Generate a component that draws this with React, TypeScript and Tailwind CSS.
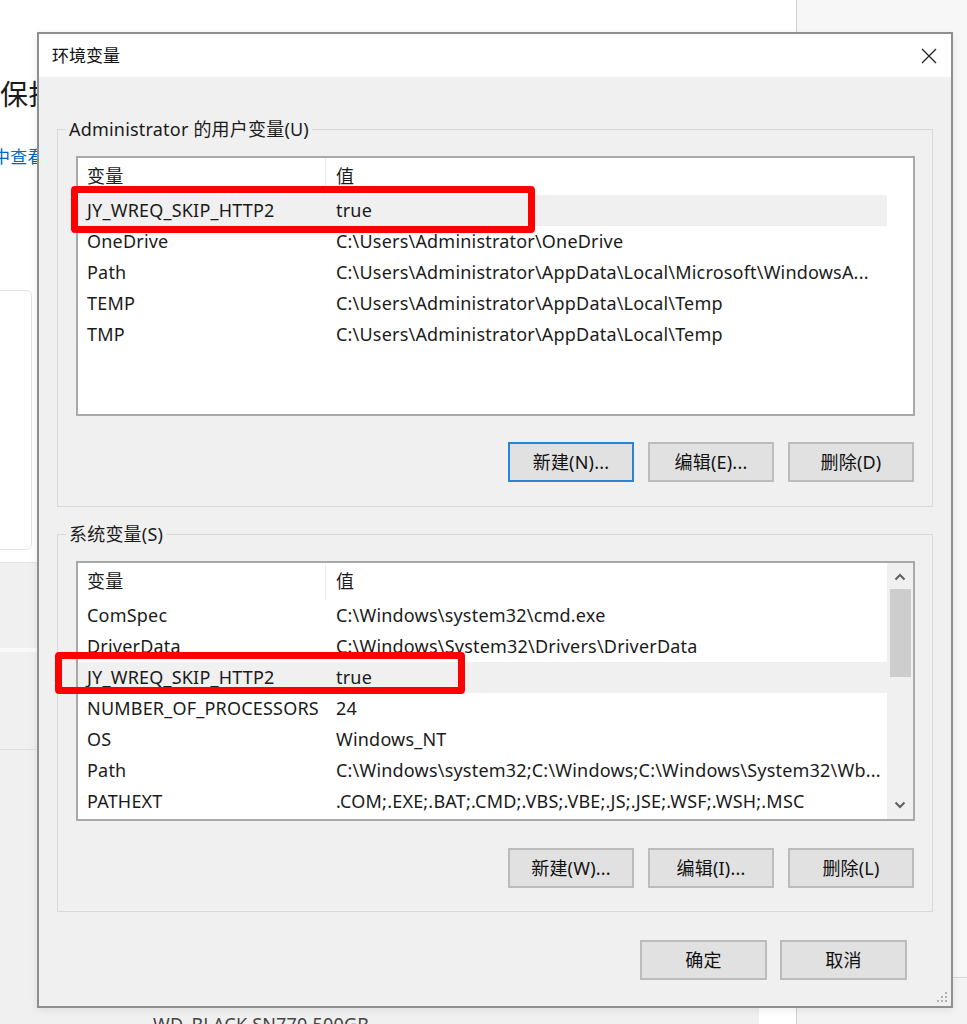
import React from 'react';

// environment variables dialog over a partially visible settings page

type Row = { name: string; value: string; selected?: boolean };

const userVars: Row[] = [
	{ name: 'JY_WREQ_SKIP_HTTP2', value: 'true', selected: true },
	{ name: 'OneDrive', value: 'C:\\Users\\Administrator\\OneDrive' },
	{ name: 'Path', value: 'C:\\Users\\Administrator\\AppData\\Local\\Microsoft\\WindowsA...' },
	{ name: 'TEMP', value: 'C:\\Users\\Administrator\\AppData\\Local\\Temp' },
	{ name: 'TMP', value: 'C:\\Users\\Administrator\\AppData\\Local\\Temp' },
];

const systemVars: Row[] = [
	{ name: 'ComSpec', value: 'C:\\Windows\\system32\\cmd.exe' },
	{ name: 'DriverData', value: 'C:\\Windows\\System32\\Drivers\\DriverData' },
	{ name: 'JY_WREQ_SKIP_HTTP2', value: 'true', selected: true },
	{ name: 'NUMBER_OF_PROCESSORS', value: '24' },
	{ name: 'OS', value: 'Windows_NT' },
	{ name: 'Path', value: 'C:\\Windows\\system32;C:\\Windows;C:\\Windows\\System32\\Wb...' },
	{ name: 'PATHEXT', value: '.COM;.EXE;.BAT;.CMD;.VBS;.VBE;.JS;.JSE;.WSF;.WSH;.MSC' },
];

const WinButton = ({ label, focused = false, wide = false }: { label: string; focused?: boolean; wide?: boolean }) => (
	<button
		type="button"
		className={`flex h-[40px] items-center justify-center border-2 bg-[#e1e1e1] text-[18px] tracking-[0.2px] text-[#111] ${wide ? 'w-[127px]' : 'w-[126px]'} ${focused ? 'border-[#2a84d2]' : 'border-[#bcbcbc]'}`}
	>
		{label}
	</button>
);

const Chevron = ({ up }: { up?: boolean }) => (
	<svg width="12" height="8" viewBox="0 0 12 8" className="text-[#606060]">
		<path d={up ? 'M1.5 6.5 L6 2 L10.5 6.5' : 'M1.5 1.5 L6 6 L10.5 1.5'} fill="none" stroke="currentColor" strokeWidth="2" />
	</svg>
);

const VarList = ({ rows, scroll = false }: { rows: Row[]; scroll?: boolean }) => (
	<div className="ml-[18px] flex h-[260px] w-[839px] border-2 border-[#a9a9a9] bg-white">
		<div className="w-[809px] overflow-hidden">
			<div className="flex h-[37px] items-center">
				<div className="flex h-full w-[248px] items-center border-r border-[#ececec] pl-[9px]">变量</div>
				<div className="pl-[10px]">值</div>
			</div>
			{rows.map((r) => (
				<div key={r.name + r.value} className={`flex h-[31px] items-center whitespace-nowrap ${r.selected ? 'bg-[#f0f0f0]' : ''}`}>
					<div className="w-[248px] overflow-hidden pl-[9px]">{r.name}</div>
					<div className="overflow-hidden pl-[10px]">{r.value}</div>
				</div>
			))}
		</div>
		{scroll && (
			<div className="flex w-[26px] flex-col items-center bg-[#f0f0f0]">
				<div className="flex h-[26px] items-center justify-center pt-[1px]">
					<Chevron up />
				</div>
				<div className="h-[88px] w-[21px] bg-[#cdcdcd]" />
				<div className="flex-1" />
				<div className="flex h-[28px] items-center justify-center">
					<Chevron />
				</div>
			</div>
		)}
	</div>
);

const GroupBox = ({ label, className, children }: { label: string; className: string; children: React.ReactNode }) => (
	<div className={`ml-[18px] w-[876px] border border-[#d9d9d9] ${className}`}>
		<div className="-mt-[13px] ml-[8px] w-fit bg-[#f0f0f0] px-[3px] leading-[24px]">{label}</div>
		{children}
	</div>
);

export default function App() {
	return (
		<div className="relative h-[1024px] w-[967px] overflow-hidden font-['Noto_Sans','Noto_Sans_CJK_SC',sans-serif] text-[18px] tracking-[0.2px] text-[#1b1b1b]">
			{/* page behind the dialog */}
			<div className="flex h-full">
				<div className="flex w-[797px] flex-col border-r border-[#cfcfcf]">
					<div className="h-[562px] shrink-0 bg-white">
						<div className="pt-[76px] text-[28px] leading-[36px] text-[#1b1b1b]">保护</div>
						<div className="-ml-[7px] mt-[33px] text-[17px] leading-[24px] text-[#0067c0]">中查看</div>
						<div className="-ml-[8px] mt-[121px] h-[260px] w-[40px] rounded-md border border-[#e3e3e3] bg-white" />
					</div>
					<div className="h-[86px] shrink-0 border-t border-[#e3e3e3] bg-[#f0f0f0]" />
					<div className="h-[102px] shrink-0 border-t-4 border-b border-t-[#fafafa] border-b-[#e0e0e0] bg-[#f0f0f0]" />
					<div className="flex h-[274px] shrink-0 bg-[#f0f0f0]">
						<div className="flex-1 pl-[153px] pt-[262px] leading-[24px] text-[#444]">WD_BLACK SN770 500GB</div>
						<div className="mt-[257px] w-[37px] bg-white" />
					</div>
				</div>
				<div className="flex flex-1 flex-col bg-[#f7f7f7]">
					<div className="h-[977px]" />
					<div className="flex-1 border-t border-[#d6d6d6] bg-[#f3f3f3]" />
				</div>
			</div>

			{/* dialog window */}
			<div className="absolute left-[37px] top-[32px] flex h-[976px] w-[916px] flex-col border-2 border-[#8f8f8f] bg-[#f0f0f0] shadow-[0_2px_8px_rgba(0,0,0,0.08)]">
				<div className="flex h-[43px] items-center justify-between bg-white pl-[13px] pr-[14px]">
					<span className="text-[17px] tracking-normal text-[#111]">环境变量</span>
					<svg width="16" height="16" viewBox="0 0 16 16">
						<path d="M1 1 L15 15 M15 1 L1 15" stroke="#222" strokeWidth="1.3" />
					</svg>
				</div>

				<GroupBox label="Administrator 的用户变量(U)" className="mt-[52px] pb-[24px]">
					<div className="mt-[15px]">
						<VarList rows={userVars} />
					</div>
					<div className="mt-[26px] flex justify-end gap-[14px] pr-[18px]">
						<WinButton label="新建(N)..." focused />
						<WinButton label="编辑(E)..." />
						<WinButton label="删除(D)" />
					</div>
				</GroupBox>

				<GroupBox label="系统变量(S)" className="mt-[27px] pb-[23px]">
					<div className="mt-[15px]">
						<VarList rows={systemVars} scroll />
					</div>
					<div className="mt-[27px] flex justify-end gap-[14px] pr-[18px]">
						<WinButton label="新建(W)..." />
						<WinButton label="编辑(I)..." />
						<WinButton label="删除(L)" />
					</div>
				</GroupBox>

				<div className="mt-[28px] flex justify-end gap-[13px] pr-[44px]">
					<WinButton label="确定" wide />
					<WinButton label="取消" wide />
				</div>

				{/* resize grip */}
				<svg className="absolute bottom-[3px] right-[3px]" width="12" height="12" viewBox="0 0 12 12">
					<g fill="#b0b0b0">
						<rect x="9" y="1" width="2" height="2" />
						<rect x="5" y="5" width="2" height="2" />
						<rect x="9" y="5" width="2" height="2" />
						<rect x="1" y="9" width="2" height="2" />
						<rect x="5" y="9" width="2" height="2" />
						<rect x="9" y="9" width="2" height="2" />
					</g>
				</svg>
			</div>

			{/* red highlight marks */}
			<div className="absolute left-[71px] top-[186px] h-[47px] w-[464px] rounded-[4px] border-[7px] border-[#ff0000]" />
			<div className="absolute left-[55px] top-[652px] h-[42px] w-[410px] rounded-[4px] border-[7px] border-[#ff0000]" />
		</div>
	);
}
